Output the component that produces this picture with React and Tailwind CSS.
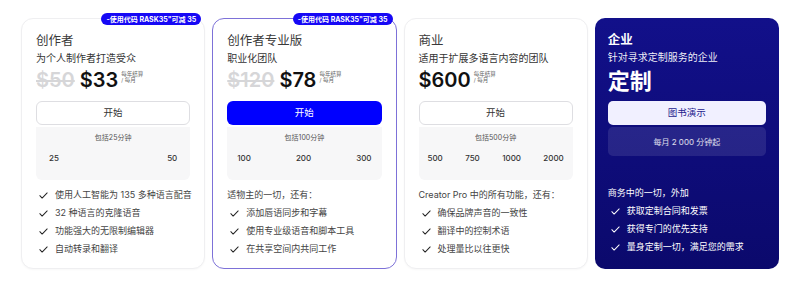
import React from 'react';

const Check = ({ className }) => (
  <svg viewBox="0 0 24 24" className={className} fill="none" stroke="currentColor" strokeWidth="2.2" strokeLinecap="round" strokeLinejoin="round">
    <path d="M4 12.5l5 5L20 6.5" />
  </svg>
);

const plans = [
  {
    name: '创作者',
    desc: '为个人制作者打造受众',
    oldPrice: '$50',
    price: '$33',
    badge: true,
    primary: false,
    minutes: '包括25分钟',
    ticks: ['25', '50'],
    tickPad: 'px-[13px]',
    header: null,
    features: ['使用人工智能为 135 多种语言配音', '32 种语言的克隆语音', '功能强大的无限制编辑器', '自动转录和翻译'],
  },
  {
    name: '创作者专业版',
    desc: '职业化团队',
    oldPrice: '$120',
    price: '$78',
    badge: true,
    primary: true,
    minutes: '包括100分钟',
    ticks: ['100', '200', '300'],
    tickPad: 'px-[10px]',
    header: '适物主的一切，还有：',
    features: ['添加唇语同步和字幕', '使用专业级语音和脚本工具', '在共享空间内共同工作'],
  },
  {
    name: '商业',
    desc: '适用于扩展多语言内容的团队',
    oldPrice: null,
    price: '$600',
    badge: false,
    primary: false,
    minutes: '包括500分钟',
    ticks: ['500', '750', '1000', '2000'],
    tickPad: 'px-[9px]',
    header: 'Creator Pro 中的所有功能，还有：',
    features: ['确保品牌声音的一致性', '翻译中的控制术语', '处理量比以往更快'],
  },
];

const PlanCard = ({ plan }) => (
  <div
    className={`relative flex flex-col rounded-[12px] bg-white px-[14px] pt-[14px] pb-[12px] ${
      plan.primary ? 'border border-[#7d71d8]' : 'border border-[#efeff1] shadow-[0_1px_2px_rgba(0,0,0,0.03)]'
    }`}
  >
    {plan.badge && (
      <div className="absolute -top-[6px] right-[3px] rounded-full bg-[#1608f5] px-[5px] h-[12px] flex items-center text-[7px] font-bold text-white leading-none whitespace-nowrap">
        -使用代码 RASK35"可减 35
      </div>
    )}
    <div className="text-[12.5px] leading-[16px] text-[#3a3a3a]">{plan.name}</div>
    <div className="mt-[2px] text-[10px] leading-[14px] text-[#333]">{plan.desc}</div>
    <div className="mt-[3px] flex items-center h-[24px]">
      {plan.oldPrice && (
        <span className="mr-[5px] text-[20px] font-semibold leading-none text-[#d6d6d8] line-through decoration-[1.5px]">
          {plan.oldPrice}
        </span>
      )}
      <span className="text-[20px] font-semibold leading-none text-[#111]">{plan.price}</span>
      <span className="ml-[3px] flex flex-col text-[5.5px] leading-[6.5px] text-[#666] -mt-[6px]">
        <span>每年结算</span>
        <span>/ 每月</span>
      </span>
    </div>
    <button
      className={`mt-[9px] h-[24px] w-full rounded-[6px] text-[9.5px] ${
        plan.primary ? 'bg-[#0000ff] text-white' : 'border border-[#dedee2] bg-white text-[#333]'
      }`}
    >
      开始
    </button>
    <div className="mt-[2px] h-[53px] rounded-b-[6px] bg-[#f7f7f8] pt-[6px]">
      <div className="text-center text-[7px] leading-[10px] text-[#555]">{plan.minutes}</div>
      <div className={`mt-[9px] flex justify-between ${plan.tickPad} text-[8px] font-medium text-[#333]`}>
        {plan.ticks.map((t) => (
          <span key={t}>{t}</span>
        ))}
      </div>
    </div>
    <div className="mt-[8px] flex flex-col gap-[4px] text-[9px] leading-[14px] text-[#444]">
      {plan.header && <div>{plan.header}</div>}
      {plan.features.map((f) => (
        <div key={f} className="flex items-center gap-[6px] whitespace-nowrap">
          <Check className="h-[11px] w-[11px] text-[#222] shrink-0 ml-[2px]" />
          <span>{f}</span>
        </div>
      ))}
    </div>
  </div>
);

const EnterpriseCard = () => (
  <div className="flex flex-col rounded-[10px] bg-gradient-to-b from-[#12108a] to-[#0b096c] px-[13px] pt-[14px] pb-[12px] text-white">
    <div className="text-[12.5px] leading-[16px] font-semibold">企业</div>
    <div className="mt-[2px] text-[10px] leading-[14px] text-white/95">针对寻求定制服务的企业</div>
    <div className="mt-[4px] text-[22px] font-bold leading-[26px]">定制</div>
    <button className="mt-[7px] h-[24px] w-full rounded-[5px] bg-[#f1f0ff] text-[9.5px] text-[#1c1a8e]">图书演示</button>
    <div className="mt-[2px] flex h-[29px] items-center justify-center rounded-[5px] bg-white/10 text-[8px] text-white/85">
      每月 2 000 分钟起
    </div>
    <div className="mt-[30px] flex flex-col gap-[4px] text-[9px] leading-[14px] text-white">
      <div>商务中的一切，外加</div>
      {['获取定制合同和发票', '获得专门的优先支持', '量身定制一切，满足您的需求'].map((f) => (
        <div key={f} className="flex items-center gap-[6px] whitespace-nowrap">
          <Check className="h-[11px] w-[11px] shrink-0 ml-[2px]" />
          <span>{f}</span>
        </div>
      ))}
    </div>
  </div>
);

export default function App() {
  return (
    <div
      className="h-[284px] w-[800px] bg-white px-[21px] pt-[18px]"
      style={{ fontFamily: 'Inter, "Noto Sans CJK SC", sans-serif' }}
    >
      <div className="grid h-[249px] grid-cols-4 gap-[7px]">
        {plans.map((p) => (
          <PlanCard key={p.name} plan={p} />
        ))}
        <EnterpriseCard />
      </div>
    </div>
  );
}
